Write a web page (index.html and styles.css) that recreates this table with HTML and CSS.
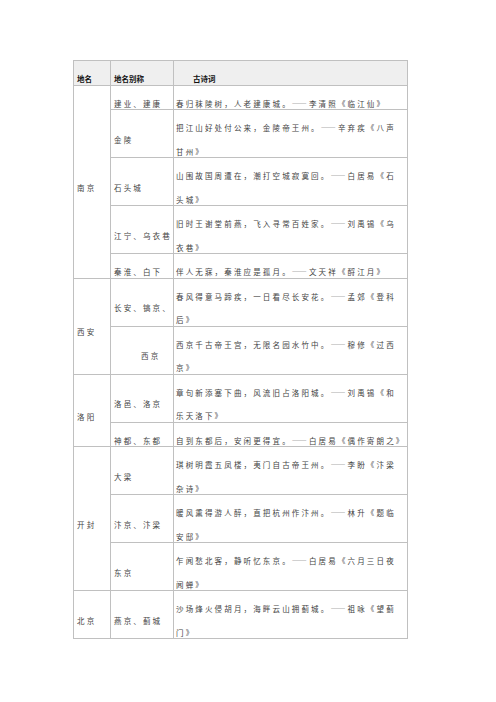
FILE: index.html
```html
<!DOCTYPE html>
<html lang="zh-CN">
<head>
<meta charset="utf-8">
<title>地名别称与古诗词</title>
<link rel="stylesheet" href="styles.css">
</head>
<body>
<table class="tbl">
  <colgroup>
    <col class="w1">
    <col class="w2">
    <col class="w3">
  </colgroup>
  <thead>
    <tr class="head">
      <th><div class="c">地名</div></th>
      <th><div class="c">地名别称</div></th>
      <th class="poem-h"><div class="c">古诗词</div></th>
    </tr>
  </thead>
  <tbody>
    <tr>
      <td class="city" rowspan="5"><div class="c">南京</div></td>
      <td class="alias"><div class="c">建业、建康</div></td>
      <td class="poem"><div class="c">春归秣陵树，人老建康城。——李清照《临江仙》</div></td>
    </tr>
    <tr>
      <td class="alias"><div class="c">金陵</div></td>
      <td class="poem"><div class="c">把江山好处付公来，金陵帝王州。——辛弃疾《八声<br>甘州》</div></td>
    </tr>
    <tr>
      <td class="alias"><div class="c">石头城</div></td>
      <td class="poem"><div class="c">山围故国周遭在，潮打空城寂寞回。——白居易《石<br>头城》</div></td>
    </tr>
    <tr>
      <td class="alias"><div class="c">江宁、乌衣巷</div></td>
      <td class="poem"><div class="c">旧时王谢堂前燕，飞入寻常百姓家。——刘禹锡《乌<br>衣巷》</div></td>
    </tr>
    <tr>
      <td class="alias"><div class="c">秦淮、白下</div></td>
      <td class="poem"><div class="c">伴人无寐，秦淮应是孤月。——文天祥《酹江月》</div></td>
    </tr>
    <tr>
      <td class="city" rowspan="2"><div class="c">西安</div></td>
      <td class="alias"><div class="c">长安、镐京、</div></td>
      <td class="poem"><div class="c">春风得意马蹄疾，一日看尽长安花。——孟郊《登科<br>后》</div></td>
    </tr>
    <tr>
      <td class="alias indent"><div class="c">西京</div></td>
      <td class="poem"><div class="c">西京千古帝王宫，无限名园水竹中。——穆修《过西<br>京》</div></td>
    </tr>
    <tr>
      <td class="city" rowspan="2"><div class="c">洛阳</div></td>
      <td class="alias"><div class="c">洛邑、洛京</div></td>
      <td class="poem"><div class="c">章句新添塞下曲，风流旧占洛阳城。——刘禹锡《和<br>乐天洛下》</div></td>
    </tr>
    <tr>
      <td class="alias"><div class="c">神都、东都</div></td>
      <td class="poem"><div class="c">自到东都后，安闲更得宜。——白居易《偶作寄朗之》</div></td>
    </tr>
    <tr>
      <td class="city" rowspan="3"><div class="c">开封</div></td>
      <td class="alias"><div class="c">大梁</div></td>
      <td class="poem"><div class="c">琪树明霞五凤楼，夷门自古帝王州。——李盼《汴梁<br>杂诗》</div></td>
    </tr>
    <tr>
      <td class="alias"><div class="c">汴京、汴梁</div></td>
      <td class="poem"><div class="c">暖风熏得游人醉，直把杭州作汴州。——林升《题临<br>安邸》</div></td>
    </tr>
    <tr>
      <td class="alias"><div class="c">东京</div></td>
      <td class="poem"><div class="c">乍闻愁北客，静听忆东京。——白居易《六月三日夜<br>闻蝉》</div></td>
    </tr>
    <tr>
      <td class="city"><div class="c">北京</div></td>
      <td class="alias"><div class="c">燕京、蓟城</div></td>
      <td class="poem"><div class="c">沙场烽火侵胡月，海畔云山拥蓟城。——祖咏《望蓟<br>门》</div></td>
    </tr>
  </tbody>
</table>
</body>
</html>
```

FILE: styles.css
```css
html, body {
  margin: 0;
  padding: 0;
  background: #ffffff;
}

body {
  font-family: "Noto Sans CJK SC", "Noto Sans", sans-serif;
  color: #444444;
}

.tbl {
  border-collapse: collapse;
  table-layout: fixed;
  width: 334px;
  margin: 60px 0 0 73px;
}

.w1 { width: 37px; }
.w2 { width: 63px; }
.w3 { width: 234px; }

.tbl th,
.tbl td {
  border: 1px solid #c0c0c0;
  padding: 0 0 0 3px;
  vertical-align: middle;
  text-align: left;
  overflow: hidden;
  white-space: nowrap;
}

.c {
  padding-top: 6px;
  margin-bottom: -6px;
  line-height: 23.5px;
}

.head th {
  background: #efefef;
  color: #111111;
  font-weight: bold;
  font-size: 7.5px;
  letter-spacing: 0;
}

.head .poem-h .c {
  padding-left: 16px;
}

.tbl td {
  font-size: 7.5px;
  letter-spacing: 2.15px;
}

.alias.indent .c {
  padding-left: 27px;
}

.tbl td.poem {
  padding-left: 2px;
}
```
